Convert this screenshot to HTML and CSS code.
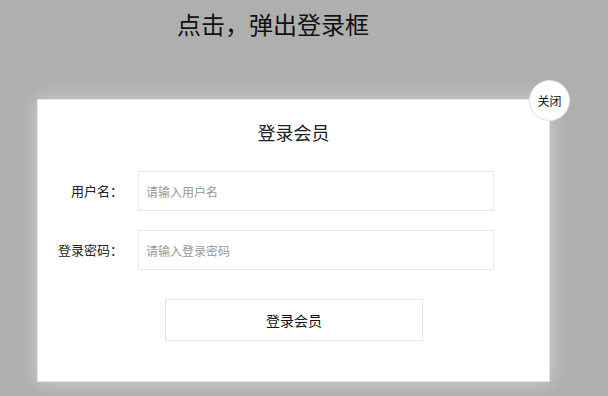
FILE: index.html
```html
<!DOCTYPE html>
<html lang="zh-CN">
<head>
    <meta charset="UTF-8">
    <title>点击，弹出登录框</title>
    <link rel="stylesheet" href="styles.css">
</head>
<body>
    <h1 class="page-title">点击，弹出登录框</h1>
    <div class="login-box">
        <div class="login-title">登录会员</div>
        <form class="login-form">
            <div class="form-row">
                <label for="username" class="form-label">用户名：</label>
                <input type="text" id="username" class="form-input" placeholder="请输入用户名">
            </div>
            <div class="form-row">
                <label for="password" class="form-label">登录密码：</label>
                <input type="password" id="password" class="form-input" placeholder="请输入登录密码">
            </div>
            <button type="button" class="login-btn">登录会员</button>
        </form>
        <a class="close-btn">关闭</a>
    </div>
</body>
</html>
```

FILE: styles.css
```css
body {
    margin: 0;
    padding: 0;
    min-height: 100vh;
    background: #afafaf;
    font-family: "Noto Sans CJK SC", "Noto Sans", sans-serif;
    color: #333;
}
.page-title {
    width: 546px;
    margin: 0;
    padding-top: 9px;
    font-size: 24px;
    line-height: 30px;
    font-weight: normal;
    color: #111;
    text-align: center;
}
.login-box {
    position: relative;
    box-sizing: border-box;
    width: 513px;
    margin: 60px 0 0 37px;
    padding: 20px 0 40px 0;
    background: #fff;
    border: 1px solid #e4e4e4;
    box-shadow: 0 0 18px rgba(255,255,255,0.45);
}
.login-title {
    font-size: 18px;
    line-height: 24px;
    text-align: center;
    color: #222;
}
.login-form {
    display: flex;
    flex-direction: column;
    align-items: flex-start;
    margin-top: 27px;
}
.form-row {
    display: flex;
    align-items: center;
    margin-bottom: 19px;
}
.form-label {
    width: 85px;
    font-size: 13px;
    line-height: 16px;
    text-align: right;
    color: #222;
}
.form-input {
    box-sizing: border-box;
    width: 356px;
    height: 40px;
    margin-left: 15px;
    padding: 0 7px;
    border: 1px solid #e8e8e8;
    outline: none;
    font-family: inherit;
    font-size: 12px;
}
.form-input::placeholder {
    color: #999;
}
.login-btn {
    box-sizing: border-box;
    width: 258px;
    height: 42px;
    margin: 10px 0 0 127px;
    background: #fff;
    border: 1px solid #e6e6e6;
    font-family: inherit;
    font-size: 14px;
    color: #111;
    cursor: pointer;
}
.close-btn {
    position: absolute;
    top: -20px;
    right: -21px;
    width: 41px;
    height: 41px;
    box-sizing: border-box;
    border: 1px solid #e0e0e0;
    border-radius: 50%;
    background: #fff;
    font-size: 12px;
    line-height: 39px;
    text-align: center;
    color: #111;
    cursor: pointer;
}
```
